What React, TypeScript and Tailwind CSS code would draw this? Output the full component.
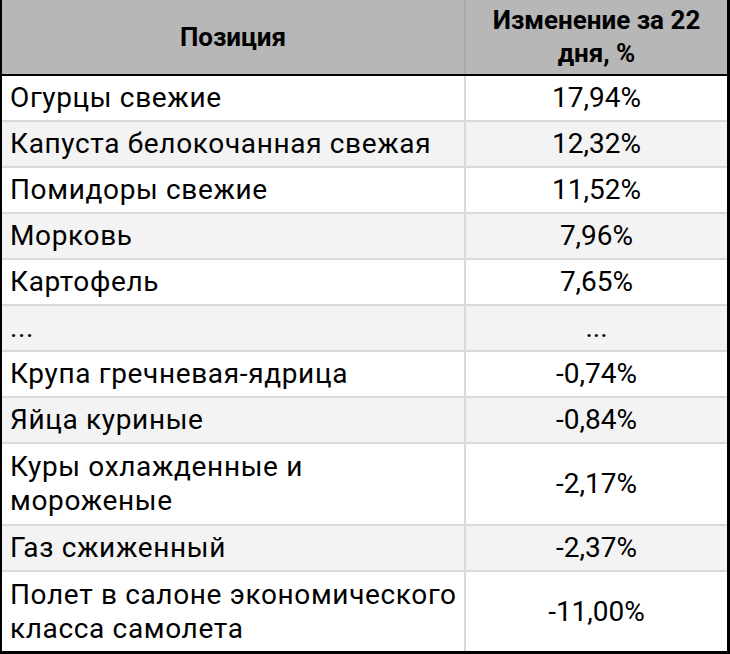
const rows: { name: string[]; value: string; tall?: boolean }[] = [
  { name: ["Огурцы свежие"], value: "17,94%" },
  { name: ["Капуста белокочанная свежая"], value: "12,32%" },
  { name: ["Помидоры свежие"], value: "11,52%" },
  { name: ["Морковь"], value: "7,96%" },
  { name: ["Картофель"], value: "7,65%" },
  { name: ["..."], value: "..." },
  { name: ["Крупа гречневая-ядрица"], value: "-0,74%" },
  { name: ["Яйца куриные"], value: "-0,84%" },
  { name: ["Куры охлажденные и", "мороженые"], value: "-2,17%", tall: true },
  { name: ["Газ сжиженный"], value: "-2,37%" },
  { name: ["Полет в салоне экономического", "класса самолета"], value: "-11,00%", tall: true },
];

export default function App() {
  return (
    <div className="w-[730px] h-[654px] bg-white font-['Roboto',sans-serif] text-black">
      <div className="flex flex-col border-l-2 border-r-[3px] border-b-[3px] border-black">
        {/* header */}
        <div className="flex h-[76px] border-b-2 border-black bg-[#b7b7b7] text-[26px] font-bold">
          <div className="flex w-[464px] items-center justify-center border-r-2 border-[#a9a9a9]">
            Позиция
          </div>
          <div className="flex flex-1 flex-col items-center justify-center leading-[33px]">
            <span>Изменение за 22</span>
            <span>дня, %</span>
          </div>
        </div>

        {rows.map((r, i) => {
          const last = i === rows.length - 1;
          const h = r.tall ? (last ? "h-[79px]" : "h-[82px]") : "h-[46px]";
          return (
            <div
              key={i}
              className={`flex text-[28px] ${h} ${last ? "" : "border-b-2 border-[#d9d9d9]"} ${
                i % 2 === 1 ? "bg-[#f3f3f3]" : "bg-white"
              }`}
            >
              <div className="flex w-[464px] flex-col justify-center border-r-2 border-[#d9d9d9] pl-2 leading-[34px] tracking-[0.65px]">
                {r.name.map((line) => (
                  <span key={line}>{line}</span>
                ))}
              </div>
              <div className="flex flex-1 items-center justify-center">{r.value}</div>
            </div>
          );
        })}
      </div>
    </div>
  );
}
